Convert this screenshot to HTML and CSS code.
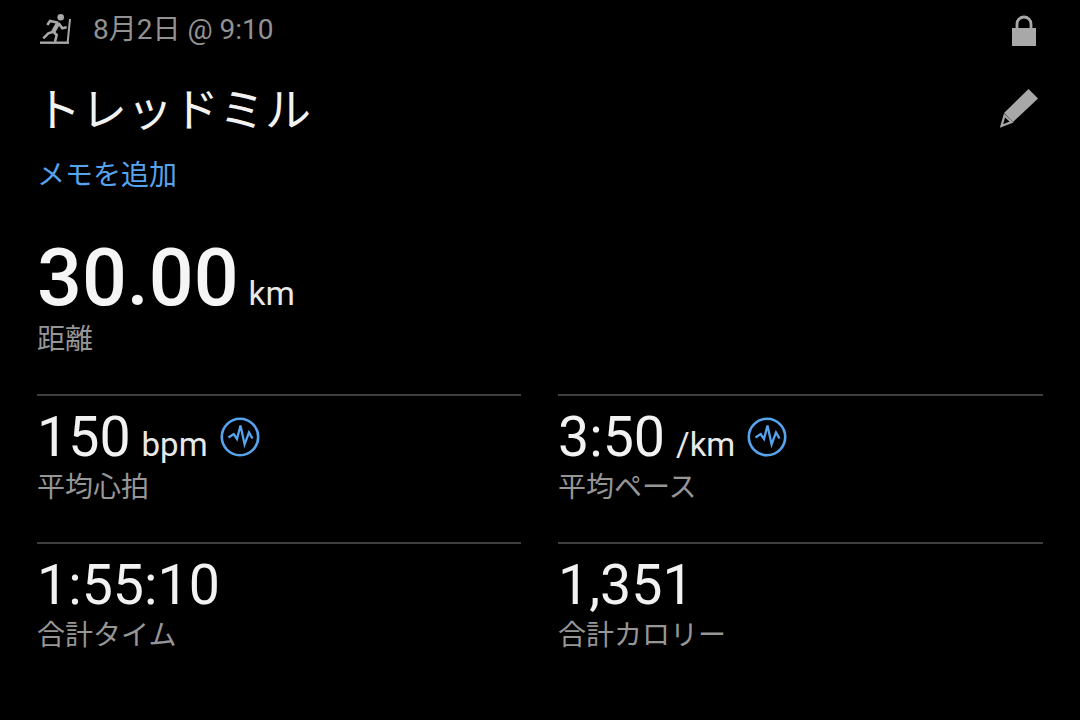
FILE: index.html
```html
<!DOCTYPE html>
<html lang="ja">
<head>
<meta charset="utf-8">
<title>トレッドミル</title>
<link rel="stylesheet" href="styles.css">
</head>
<body>
<main class="page">
  <header class="top">
    <svg class="run" viewBox="0 0 34 32" width="34" height="32"><circle cx="21.700" cy="3.300" r="3.300" fill="#a8a8a8"/><path d="M19.300 8.700L14.300 17.700" fill="none" stroke="#a8a8a8" stroke-width="4.400"/><path d="M19.300 8.700L11 7 8.300 11M19.500 9L23.300 14.300 27.700 13.300M14.300 17.700L17.700 21 16 27.700M14.300 17.700L9.300 19.300 4.300 24.300" fill="none" stroke="#a8a8a8" stroke-width="2.600"/><path d="M31 5L28.700 28" fill="none" stroke="#a8a8a8" stroke-width="2"/><path d="M1 28.700H30" fill="none" stroke="#a8a8a8" stroke-width="2.400"/></svg>
    <span class="date">8月2日 @ 9:10</span>
    <svg class="lock" viewBox="0 0 26 32" width="26" height="32"><path d="M1 13h24v18H1z" fill="#a8a8a8"/><path d="M6 14V9a7 7 0 0 1 14 0v5" fill="none" stroke="#a8a8a8" stroke-width="2.800"/></svg>
  </header>
  <div class="title-row">
    <h1 class="title">トレッドミル</h1>
    <svg class="pen" viewBox="0 0 40 40" width="40" height="40"><path d="M29.500 1L39 10.500 14 34 5 25z" fill="#a8a8a8"/><path d="M5.500 27.500l7 6.500L2.500 38z" fill="none" stroke="#a8a8a8" stroke-width="2.200"/></svg>
  </div>
  <a class="memo">メモを追加</a>
  <section class="hero">
    <div class="hero-value"><span class="big">30.00</span><span class="hero-unit">km</span></div>
    <div class="label">距離</div>
  </section>
  <section class="stats">
    <div class="stat">
      <div class="value"><span class="num">150</span><span class="unit">bpm</span>
        <svg class="pulse" viewBox="0 0 40 40" width="40" height="40"><circle cx="20" cy="20" r="18.200" fill="none" stroke="#56a3ee" stroke-width="2.600"/><path d="M8.500 20.500L13.700 17 17 22 20.500 8.500 24.600 27.400 29 15.400 32.500 21.500" fill="none" stroke="#56a3ee" stroke-width="2.300"/></svg>
      </div>
      <div class="label">平均心拍</div>
    </div>
    <div class="stat">
      <div class="value"><span class="num">3:50</span><span class="unit">/km</span>
        <svg class="pulse" viewBox="0 0 40 40" width="40" height="40"><circle cx="20" cy="20" r="18.200" fill="none" stroke="#56a3ee" stroke-width="2.600"/><path d="M8.500 20.500L13.700 17 17 22 20.500 8.500 24.600 27.400 29 15.400 32.500 21.500" fill="none" stroke="#56a3ee" stroke-width="2.300"/></svg>
      </div>
      <div class="label">平均ペース</div>
    </div>
    <div class="stat">
      <div class="value"><span class="num">1:55:10</span></div>
      <div class="label">合計タイム</div>
    </div>
    <div class="stat">
      <div class="value"><span class="num">1,351</span></div>
      <div class="label">合計カロリー</div>
    </div>
  </section>
</main>
</body>
</html>
```
FILE: styles.css
```css
* { box-sizing: border-box; }
html, body { margin: 0; height: 720px; overflow: hidden; background: #000; }
body { font-family: Roboto, "Noto Sans CJK JP", sans-serif; color: #f2f2f2; }
.page { width: 1080px; height: 720px; padding: 12px 37px 0 37px; display: flex; flex-direction: column; }
.top { display: flex; align-items: center; height: 36px; }
.run { margin-left: 2px; }
.date { margin-left: 20px; font-size: 28px; line-height: 36px; color: #929292; }
.lock { margin-left: auto; margin-right: 6px; margin-top: 2px; }
.title-row { display: flex; justify-content: space-between; align-items: center; margin-top: 30px; height: 64px; }
.title { margin: 0 0 0 -2px; font-size: 46px; line-height: 64px; font-weight: 400; }
.pen { margin-right: 4px; margin-top: -4px; }
.memo { display: block; margin-top: 14px; font-size: 28px; line-height: 40px; color: #56a3ee; }
.hero { margin-top: 40px; }
.hero-value { display: flex; align-items: baseline; height: 86px; line-height: 84px; }
.big { font-size: 79px; font-weight: 500; color: #f5f5f5; }
.hero-unit { margin-left: 10px; font-size: 33.500px; color: #e8e8e8; }
.label { font-size: 28px; line-height: 36px; color: #969696; }
.stats { display: grid; grid-template-columns: 484px 485px; column-gap: 37px; margin-top: 36px; }
.stat { height: 148px; border-top: 2px solid #3f3f3f; padding-top: 14px; }
.value { display: flex; align-items: baseline; height: 60px; line-height: 56px; }
.num { font-size: 55.500px; font-weight: 400; color: #f2f2f2; }
.unit { margin-left: 11px; font-size: 33px; color: #e8e8e8; }
.pulse { margin-left: 12px; align-self: flex-start; margin-top: 7px; }
```
